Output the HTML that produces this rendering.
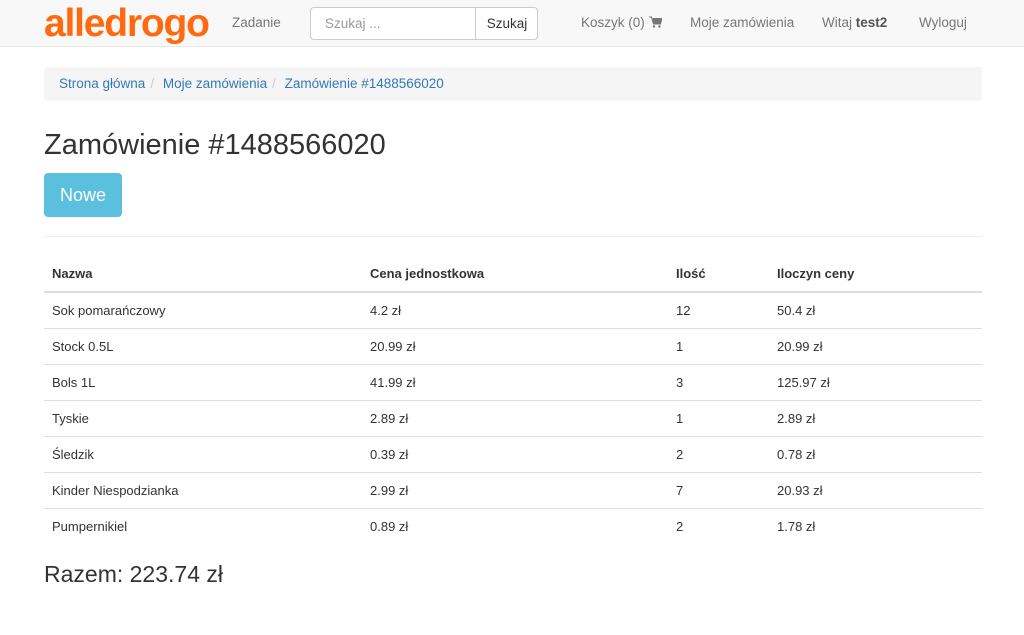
<!DOCTYPE html>
<html><head><meta charset="utf-8"><style>
*{box-sizing:border-box}
body{margin:0;font-family:"Liberation Sans",sans-serif;font-size:14px;color:#333;background:#fff}
.nav{height:47px;background:#f8f8f8;border-bottom:1px solid #e7e7e7;position:relative}
.nav a,.nav span{position:absolute;color:#777;text-decoration:none;top:15px;font-size:13.5px}
.logo{position:absolute;left:44px;top:4px;font-size:39px;line-height:1;color:#ff6a10;letter-spacing:-1.2px;font-weight:bold}
.search{position:absolute;left:310px;top:7px;width:228px;height:33px;border:1px solid #ccc;border-radius:4px;background:#fff}
.search .btn{position:absolute;left:164px;top:0;width:63px;height:31px;border-left:1px solid #ccc;color:#333;text-align:center;line-height:31px;font-size:13.5px}
.bc{position:absolute;left:44px;top:67px;width:938px;height:34px;background:#f5f5f5;border-radius:4px;padding:9px 15px;color:#ccc;font-size:13.5px}
.bc a{color:#337ab7;text-decoration:none}
.bc .s{padding:0 5px;color:#ccc}
h1{position:absolute;left:44px;top:129px;margin:0;font-size:29px;font-weight:normal;color:#333}
.badge{position:absolute;left:44px;top:173px;width:78px;height:44px;background:#5bc0de;border-radius:4px;color:#fff;font-size:18px;text-align:center;line-height:44px}
.hr{position:absolute;left:44px;top:236px;width:938px;border-top:1px solid #eee}
table{position:absolute;left:44px;top:256px;width:938px;border-collapse:collapse;font-size:13px}
th{text-align:left;font-weight:bold;height:36px;padding:0 8px;border-bottom:2px solid #ddd;vertical-align:middle}
td{height:36px;padding:0 8px;border-top:1px solid #ddd;vertical-align:middle}
tr:first-child td{border-top:0}
.total{position:absolute;left:44px;top:561px;font-size:23px}
</style></head><body>
<div class="nav">
<div class="logo">alledrogo</div>
<a style="left:232px">Zadanie</a>
<div class="search"><span style="position:absolute;left:14px;top:8px;color:#999;font-size:13.5px">Szukaj ...</span><div class="btn">Szukaj</div></div>
<a style="left:581px">Koszyk (0) <svg width="13" height="12" viewBox="0 0 13 12" style="vertical-align:-1px"><path d="M0 1h2.5l2 7h7l1.5-5.5H4" fill="#777" stroke="#777"/><circle cx="5" cy="10.5" r="1.2" fill="#777"/><circle cx="10.5" cy="10.5" r="1.2" fill="#777"/></svg></a>
<a style="left:690px">Moje zamówienia</a>
<span style="left:822px">Witaj <b style="color:#555">test2</b></span>
<a style="left:919px">Wyloguj</a>
</div>
<div class="bc"><a>Strona główna</a><span class="s">/</span> <a>Moje zamówienia</a><span class="s">/</span> <a>Zamówienie #1488566020</a></div>
<h1>Zamówienie #1488566020</h1>
<div class="badge">Nowe</div>
<div class="hr"></div>
<table>
<colgroup><col style="width:318px"><col style="width:306px"><col style="width:101px"><col></colgroup>
<thead><tr><th>Nazwa</th><th>Cena jednostkowa</th><th>Ilość</th><th>Iloczyn ceny</th></tr></thead>
<tbody>
<tr><td>Sok pomarańczowy</td><td>4.2 zł</td><td>12</td><td>50.4 zł</td></tr>
<tr><td>Stock 0.5L</td><td>20.99 zł</td><td>1</td><td>20.99 zł</td></tr>
<tr><td>Bols 1L</td><td>41.99 zł</td><td>3</td><td>125.97 zł</td></tr>
<tr><td>Tyskie</td><td>2.89 zł</td><td>1</td><td>2.89 zł</td></tr>
<tr><td>Śledzik</td><td>0.39 zł</td><td>2</td><td>0.78 zł</td></tr>
<tr><td>Kinder Niespodzianka</td><td>2.99 zł</td><td>7</td><td>20.93 zł</td></tr>
<tr><td>Pumpernikiel</td><td>0.89 zł</td><td>2</td><td>1.78 zł</td></tr>
</tbody></table>
<div class="total">Razem: 223.74 zł</div>
</body></html>
